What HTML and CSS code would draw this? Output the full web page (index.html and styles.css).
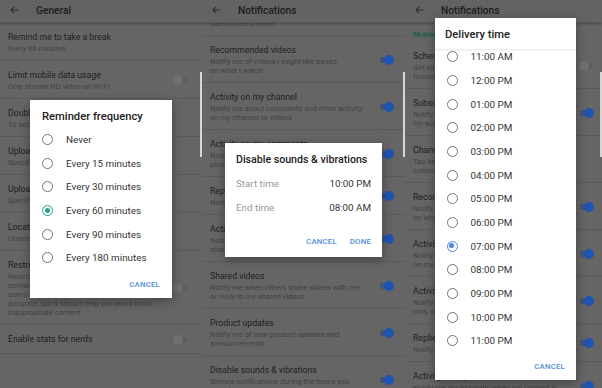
FILE: index.html
```html
<!DOCTYPE html>
<html lang="en">
<head>
<meta charset="utf-8">
<title>Settings dialogs</title>
<link rel="stylesheet" href="styles.css">
</head>
<body>
<div class="screens">

  <!-- Screen 1: General -->
  <section class="panel panel--general">
    <header class="appbar">
      <svg class="appbar__back" width="9" height="8" viewBox="0 0 9 8"><path d="M8.5 4H1M4.2 0.8L1 4l3.2 3.2" fill="none" stroke="#2e2e2e" stroke-width="1.1"/></svg>
      <h1 class="appbar__title">General</h1>
    </header>
    <div class="setting-list">
      <div class="setting"><div class="setting__text"><div class="setting__title">Remind me to take a break</div><div class="setting__desc">Every 60 minutes</div></div></div>
      <div class="setting"><div class="setting__text"><div class="setting__title">Limit mobile data usage</div><div class="setting__desc">Only stream HD video on Wi-Fi</div></div><span class="toggle"></span></div>
      <div class="setting"><div class="setting__text"><div class="setting__title">Double-tap to seek</div><div class="setting__desc">10 seconds</div></div></div>
      <div class="setting"><div class="setting__text"><div class="setting__title">Uploads</div><div class="setting__desc">Specify network preferences for uploads</div></div></div>
      <div class="setting"><div class="setting__text"><div class="setting__title">Upload quality</div><div class="setting__desc">Specify quality for uploads</div></div></div>
      <div class="setting"><div class="setting__text"><div class="setting__title">Location</div><div class="setting__desc">United States</div></div></div>
      <div class="setting"><div class="setting__text"><div class="setting__title">Restricted Mode</div><div class="setting__desc">Restricted Mode hides videos that may<br>contain inappropriate content flagged by<br>users and other signals. No filter is 100%<br>accurate, but it should help you avoid most<br>inappropriate content.</div></div><span class="toggle"></span></div>
      <div class="setting"><div class="setting__text"><div class="setting__title">Enable stats for nerds</div></div><span class="toggle"></span></div>
    </div>
    <span class="scroll-thumb"></span>

    <div class="dialog dialog--reminder">
      <h2 class="dialog__title">Reminder frequency</h2>
      <ul class="choices">
        <li class="choice"><span class="radio"></span>Never</li>
        <li class="choice"><span class="radio"></span>Every 15 minutes</li>
        <li class="choice"><span class="radio"></span>Every 30 minutes</li>
        <li class="choice"><span class="radio radio--teal"></span>Every 60 minutes</li>
        <li class="choice"><span class="radio"></span>Every 90 minutes</li>
        <li class="choice"><span class="radio"></span>Every 180 minutes</li>
      </ul>
      <div class="dialog__actions"><span class="btn">CANCEL</span></div>
    </div>
  </section>

  <!-- Screen 2: Notifications / quiet hours -->
  <section class="panel panel--notif">
    <header class="appbar">
      <svg class="appbar__back" width="9" height="8" viewBox="0 0 9 8"><path d="M8.5 4H1M4.2 0.8L1 4l3.2 3.2" fill="none" stroke="#2e2e2e" stroke-width="1.1"/></svg>
      <h1 class="appbar__title">Notifications</h1>
    </header>
    <div class="setting-list setting-list--scrolled">
      <div class="setting"><div class="setting__text"><div class="setting__title">Subscriptions</div><div class="setting__desc">Notify me about activity from the<br>subscribed channel</div></div><span class="toggle toggle--on"></span></div>
      <div class="setting"><div class="setting__text"><div class="setting__title">Recommended videos</div><div class="setting__desc">Notify me of videos I might like based<br>on what I watch</div></div><span class="toggle toggle--on"></span></div>
      <div class="setting"><div class="setting__text"><div class="setting__title">Activity on my channel</div><div class="setting__desc">Notify me about comments and other activity<br>on my channel or videos</div></div><span class="toggle toggle--on"></span></div>
      <div class="setting"><div class="setting__text"><div class="setting__title">Activity on my comments</div><div class="setting__desc">Notify me about replies to my comments, likes,<br>pins, or hearts</div></div><span class="toggle toggle--on"></span></div>
      <div class="setting"><div class="setting__text"><div class="setting__title">Replies to my comments</div><div class="setting__desc">Notify me about replies to my comments</div></div><span class="toggle toggle--on"></span></div>
      <div class="setting"><div class="setting__text"><div class="setting__title">Activity on shared content</div><div class="setting__desc">Notify me about activity on content I've<br>shared</div></div><span class="toggle toggle--on"></span></div>
      <div class="setting"><div class="setting__text"><div class="setting__title">Shared videos</div><div class="setting__desc">Notify me when others share videos with me,<br>or reply to my shared videos</div></div><span class="toggle toggle--on"></span></div>
      <div class="setting"><div class="setting__text"><div class="setting__title">Product updates</div><div class="setting__desc">Notify me of new product updates and<br>announcements</div></div><span class="toggle toggle--on"></span></div>
      <div class="setting"><div class="setting__text"><div class="setting__title">Disable sounds &amp; vibrations</div><div class="setting__desc">Silence notifications during the hours you<br>specify. Tap to customize time.</div></div><span class="toggle toggle--on"></span></div>
    </div>
    <span class="scroll-thumb"></span>

    <div class="dialog dialog--quiet">
      <h2 class="dialog__title">Disable sounds &amp; vibrations</h2>
      <div class="time-row"><span class="time-row__label">Start time</span><span class="time-row__value">10:00 PM</span></div>
      <div class="time-row"><span class="time-row__label">End time</span><span class="time-row__value">08:00 AM</span></div>
      <div class="dialog__actions dialog__actions--pair"><span class="btn">CANCEL</span><span class="btn">DONE</span></div>
    </div>
  </section>

  <!-- Screen 3: Delivery time -->
  <section class="panel panel--delivery">
    <header class="appbar">
      <svg class="appbar__back" width="9" height="8" viewBox="0 0 9 8"><path d="M8.5 4H1M4.2 0.8L1 4l3.2 3.2" fill="none" stroke="#2e2e2e" stroke-width="1.1"/></svg>
      <h1 class="appbar__title">Notifications</h1>
    </header>
    <div class="setting-list">
      <div class="section-label">Mobile notifications</div>
      <div class="setting"><div class="setting__text"><div class="setting__title">Scheduled digest</div><div class="setting__desc">Get all notifications as a daily digest. Tap<br>to customize delivery time</div></div><span class="toggle"></span></div>
      <div class="setting"><div class="setting__text"><div class="setting__title">Subscriptions</div><div class="setting__desc">Notify me about activity from the channels<br>I'm subscribed to</div></div><span class="toggle toggle--on"></span></div>
      <div class="setting"><div class="setting__text"><div class="setting__title">Channel settings</div><div class="setting__desc">Tap here to manage notifications for<br>subscribed channels</div></div></div>
      <div class="setting"><div class="setting__text"><div class="setting__title">Recommended videos</div><div class="setting__desc">Notify me of videos I might like based<br>on what I watch</div></div><span class="toggle toggle--on"></span></div>
      <div class="setting"><div class="setting__text"><div class="setting__title">Activity on my channel</div><div class="setting__desc">Notify me about comments and other activity<br>on my channel or videos</div></div><span class="toggle toggle--on"></span></div>
      <div class="setting"><div class="setting__text"><div class="setting__title">Activity on my comments</div><div class="setting__desc">Notify me about replies to my comments, likes,<br>pins, or hearts</div></div><span class="toggle toggle--on"></span></div>
      <div class="setting"><div class="setting__text"><div class="setting__title">Replies to my comments</div><div class="setting__desc">Notify me about replies to my comments</div></div><span class="toggle toggle--on"></span></div>
      <div class="setting"><div class="setting__text"><div class="setting__title">Activity on my content</div><div class="setting__desc">Notify me occasionally when my content is<br>trending</div></div><span class="toggle toggle--on"></span></div>
    </div>
    <span class="scroll-thumb"></span>

    <div class="dialog dialog--delivery">
      <h2 class="dialog__title dialog__title--ruled">Delivery time</h2>
      <div class="choices-scroll">
        <ul class="choices choices--scrolled">
          <li class="choice"><span class="radio"></span>11:00 AM</li>
          <li class="choice"><span class="radio"></span>12:00 PM</li>
          <li class="choice"><span class="radio"></span>01:00 PM</li>
          <li class="choice"><span class="radio"></span>02:00 PM</li>
          <li class="choice"><span class="radio"></span>03:00 PM</li>
          <li class="choice"><span class="radio"></span>04:00 PM</li>
          <li class="choice"><span class="radio"></span>05:00 PM</li>
          <li class="choice"><span class="radio"></span>06:00 PM</li>
          <li class="choice"><span class="radio radio--blue"></span>07:00 PM</li>
          <li class="choice"><span class="radio"></span>08:00 PM</li>
          <li class="choice"><span class="radio"></span>09:00 PM</li>
          <li class="choice"><span class="radio"></span>10:00 PM</li>
          <li class="choice"><span class="radio"></span>11:00 PM</li>
        </ul>
      </div>
      <div class="dialog__actions"><span class="btn">CANCEL</span></div>
    </div>
  </section>

</div>
</body>
</html>
```

FILE: styles.css
```css
* { box-sizing: border-box; margin: 0; padding: 0; }

html, body {
  width: 602px;
  height: 388px;
  overflow: hidden;
  background: #646464;
  font-family: Roboto, "Noto Sans", "Liberation Sans", sans-serif;
}

.screens {
  display: grid;
  grid-template-columns: 202px 203px 197px;
  height: 388px;
}

.panel {
  position: relative;
  overflow: hidden;
  background: #656565;
  display: flex;
  flex-direction: column;
}

/* App bar */
.appbar {
  position: relative;
  z-index: 1;
  flex: none;
  height: 23px;
  display: flex;
  align-items: center;
  padding: 0 0 2px 10px;
  background: #636363;
  border-bottom: 1px solid #575757;
  box-shadow: 0 1px 2px rgba(0, 0, 0, 0.25);
}
.appbar__back { flex: none; margin-right: 17px; }
.appbar__title {
  font-size: 10.2px;
  font-weight: 500;
  color: #1c1c1c;
  white-space: nowrap;
}

/* Settings rows */
.setting-list { display: flex; flex-direction: column; }
.setting-list--scrolled { margin-top: -34px; }

.section-label {
  padding: 7px 8px 2px;
  height: 19px;
  font-size: 7.4px;
  line-height: 10px;
  font-weight: 500;
  color: #175d4c;
  white-space: nowrap;
}

.setting {
  display: flex;
  align-items: center;
  padding: 8px 14px 7px 8px;
  border-bottom: 1px solid #5b5b5b;
  white-space: nowrap;
}
.panel--notif .setting { padding-right: 11px; }
.panel--delivery .setting { padding-right: 8px; }

.setting__text { flex: 1; min-width: 0; overflow: hidden; }
.setting__title {
  font-size: 8.7px;
  line-height: 13px;
  color: #1e1e1e;
}
.setting__desc {
  font-size: 7.6px;
  line-height: 9px;
  color: #434343;
}

/* Toggles */
.toggle {
  flex: none;
  position: relative;
  width: 15px;
  height: 10px;
}
.toggle::before {
  content: "";
  position: absolute;
  left: 1px;
  right: 1px;
  top: 2px;
  height: 6px;
  border-radius: 3px;
  background: #5d5d5d;
}
.toggle::after {
  content: "";
  position: absolute;
  left: 0;
  top: 0;
  width: 10px;
  height: 10px;
  border-radius: 50%;
  background: #707070;
}
.toggle--on::before { background: #3e5478; }
.toggle--on::after { left: auto; right: 0; background: #1f55b2; }

.scroll-thumb {
  position: absolute;
  right: 0;
  top: 72px;
  width: 2px;
  height: 85px;
  background: #d6d6d6;
}

/* Dialogs */
.dialog {
  position: absolute;
  z-index: 2;
  background: #ffffff;
  box-shadow: 0 3px 10px rgba(0, 0, 0, 0.35);
  display: flex;
  flex-direction: column;
}
.dialog--reminder { left: 30px; top: 100px; width: 142px; height: 198px; }
.dialog--quiet { left: 23px; top: 143px; width: 157px; height: 114px; padding: 0 11px; }
.dialog--delivery { left: 30px; top: 18px; width: 141px; height: 362px; }

.dialog__title {
  padding: 10px 12px 0;
  font-size: 11.2px;
  line-height: 14px;
  font-weight: 500;
  color: #212121;
  white-space: nowrap;
}
.dialog--quiet .dialog__title { padding: 10px 0 0; font-size: 10.6px; }
.dialog__title--ruled {
  padding: 10px 10px 7px;
  border-bottom: 1px solid #ececec;
  box-shadow: 0 1px 1px rgba(0, 0, 0, 0.04);
  position: relative;
  z-index: 1;
}

.choices { list-style: none; margin-top: 4px; }
.choices-scroll { height: 303px; overflow: hidden; }
.choices--scrolled { margin-top: -5px; }

.choice {
  display: flex;
  align-items: center;
  height: 23.6px;
  padding-left: 12px;
  font-size: 9.9px;
  color: #333333;
  white-space: nowrap;
}
.dialog--delivery .choice { height: 23.67px; padding-left: 11.5px; }

.radio {
  flex: none;
  position: relative;
  width: 11px;
  height: 11px;
  margin-right: 13px;
  border: 1.3px solid #737373;
  border-radius: 50%;
}
.radio--teal { border-color: #27a191; }
.radio--blue { border-color: #4a86e8; }
.radio--teal::after,
.radio--blue::after {
  content: "";
  position: absolute;
  left: 1.7px;
  top: 1.7px;
  width: 5px;
  height: 5px;
  border-radius: 50%;
}
.radio--teal::after { background: #27a191; }
.radio--blue::after { background: #4a86e8; }

.time-row {
  display: flex;
  justify-content: space-between;
  align-items: center;
  height: 24px;
  font-size: 9.8px;
  white-space: nowrap;
}
.dialog--quiet .time-row:first-of-type { margin-top: 4px; }
.time-row__label { color: #9a9a9a; }
.time-row__value { color: #333333; }

.dialog__actions {
  margin-top: auto;
  display: flex;
  justify-content: flex-end;
  gap: 13px;
  padding: 0 12px 8px;
}
.dialog--quiet .dialog__actions { padding: 0 0 10px; }
.dialog--delivery .dialog__actions { padding: 0 11px 8px; }

.btn {
  font-size: 7.8px;
  line-height: 10px;
  font-weight: 500;
  letter-spacing: 0.2px;
  color: #4f8fd8;
}
```
